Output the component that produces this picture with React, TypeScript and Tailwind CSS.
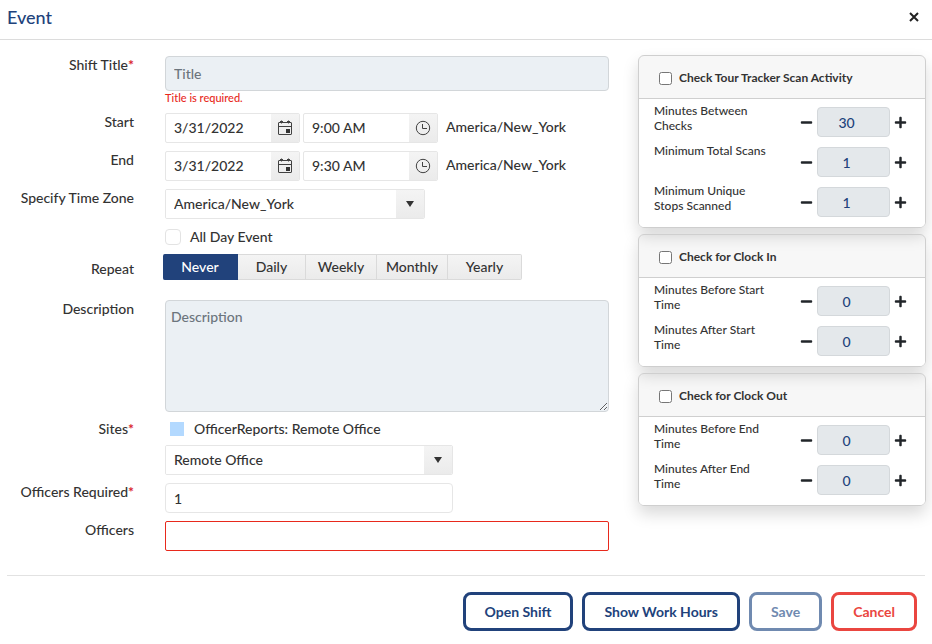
import { useState } from "react";
import type { ReactNode } from "react";
import { FaMinus, FaPlus } from "react-icons/fa";

const repeatOptions = [
  { label: "Never", width: "w-[75px]" },
  { label: "Daily", width: "w-[68px]" },
  { label: "Weekly", width: "w-[71px]" },
  { label: "Monthly", width: "w-[71px]" },
  { label: "Yearly", width: "w-[74px]" },
];

const checks = [
  {
    id: "tour",
    title: "Check Tour Tracker Scan Activity",
    fields: [
      { label: "Minutes Between Checks", value: 30 },
      { label: "Minimum Total Scans", value: 1 },
      { label: "Minimum Unique Stops Scanned", value: 1 },
    ],
  },
  {
    id: "clock-in",
    title: "Check for Clock In",
    fields: [
      { label: "Minutes Before Start Time", value: 0 },
      { label: "Minutes After Start Time", value: 0 },
    ],
  },
  {
    id: "clock-out",
    title: "Check for Clock Out",
    fields: [
      { label: "Minutes Before End Time", value: 0 },
      { label: "Minutes After End Time", value: 0 },
    ],
  },
];

function CalendarIcon() {
  return (
    <svg width="16" height="16" viewBox="0 0 16 16" fill="none" stroke="#424242" aria-hidden="true">
      <rect x="1.5" y="2.5" width="13" height="12" rx="0.5" />
      <path d="M1.5 6.5h13" />
      <path d="M4.5 0.5v3M11.5 0.5v3" />
      <path d="M3 1.5h3M10 1.5h3" />
      <rect x="9" y="9" width="4" height="4" fill="#333" stroke="none" />
    </svg>
  );
}

function ClockIcon() {
  return (
    <svg width="16" height="16" viewBox="0 0 16 16" fill="none" stroke="#424242" aria-hidden="true">
      <circle cx="8" cy="8" r="6.7" />
      <path d="M7.5 4v4.5H12" />
    </svg>
  );
}

function Row({ label, htmlFor, required, className = "", children }: { label?: string; htmlFor?: string; required?: boolean; className?: string; children: ReactNode }) {
  return (
    <div className={`flex items-start ${className}`}>
      <div className="w-[134px] shrink-0 text-right leading-[18px]">
        {label && (
          <label htmlFor={htmlFor}>
            {label}
            {required && <span className="font-bold text-[#d9232e]">*</span>}
          </label>
        )}
      </div>
      <div className="ml-[31px] min-w-0 flex-1">{children}</div>
    </div>
  );
}

function Picker({ id, label, value, icon }: { id?: string; label: string; value: string; icon: ReactNode }) {
  return (
    <div className="flex h-[30px] w-[135px] overflow-hidden rounded-xs border border-[#e6e6e6]">
      <input id={id} aria-label={label} defaultValue={value} className="w-full min-w-0 pl-2 outline-none" />
      <button type="button" aria-label={`Pick ${label}`} className="grid w-7 shrink-0 place-items-center bg-linear-to-b from-[#f4f4f4] to-[#ebebeb]">
        {icon}
      </button>
    </div>
  );
}

function DateTimeRow({ id, label, time }: { id: string; label: string; time: string }) {
  return (
    <Row label={label} htmlFor={id} className="mt-2">
      <div className="flex">
        <Picker id={id} label={`${label} date`} value="3/31/2022" icon={<CalendarIcon />} />
        <div className="ml-[3px]">
          <Picker label={`${label} time`} value={time} icon={<ClockIcon />} />
        </div>
        <span className="ml-2 leading-7">America/New_York</span>
      </div>
    </Row>
  );
}

function Dropdown({ id, value, className }: { id: string; value: string; className: string }) {
  return (
    <div className={`relative h-[30px] overflow-hidden rounded-xs border border-[#e6e6e6] ${className}`}>
      <select id={id} defaultValue={value} className="h-full w-full appearance-none bg-white pl-2 outline-none">
        <option>{value}</option>
      </select>
      <span className="pointer-events-none absolute inset-y-0 right-0 grid w-7 place-items-center bg-linear-to-b from-[#f4f4f4] to-[#ebebeb]">
        <svg width="8" height="6" viewBox="0 0 8 6" fill="#333" aria-hidden="true">
          <path d="M0 0h8L4 6z" />
        </svg>
      </span>
    </div>
  );
}

function Stepper({ id, label, initial }: { id: string; label: string; initial: number }) {
  const [value, setValue] = useState(initial);

  return (
    <div className="flex h-10 items-start">
      <label htmlFor={id} className="w-[120px] text-xs leading-[15px]">
        {label}
      </label>
      <div className="ml-auto flex items-center pt-1 text-[13px] text-[#212529]">
        <button type="button" aria-label={`Decrease ${label}`} onClick={() => setValue(Math.max(0, value - 1))}>
          <FaMinus />
        </button>
        <input
          id={id}
          value={value}
          onChange={(event) => setValue(Number(event.target.value) || 0)}
          className="mx-1 h-[30px] w-[73px] rounded-sm border border-[#d4d8db] bg-[#e4e8eb] pr-3.5 text-center text-sm text-[#21427b] outline-none"
        />
        <button type="button" aria-label={`Increase ${label}`} onClick={() => setValue(value + 1)}>
          <FaPlus />
        </button>
      </div>
    </div>
  );
}

export default function App() {
  const [repeat, setRepeat] = useState("Never");

  return (
    <div className="min-h-screen bg-white font-['Lato',sans-serif] text-sm font-medium text-[#333]">
      <header className="flex h-10 items-center justify-between border-b border-[#dcdcdc] pr-3 pb-1.5 pl-[7px]">
        <h1 className="text-lg text-[#21427b]">Event</h1>
        <button type="button" aria-label="Close" className="grid h-3 w-3 place-items-center">
          <svg width="10" height="10" viewBox="0 0 10 10" fill="none" stroke="#222" strokeWidth="2" aria-hidden="true">
            <path d="M1 1l8 8M9 1L1 9" />
          </svg>
        </button>
      </header>

      <form onSubmit={(event) => event.preventDefault()}>
        <div className="flex items-start">
          <div className="min-w-0 flex-1 pt-4">
            <Row label="Shift Title" htmlFor="title" required>
              <input
                id="title"
                placeholder="Title"
                className="block h-[35px] w-full rounded-sm border border-[#d2d6d9] bg-[#ebf0f4] px-2 outline-none placeholder:text-[#6c757d]"
              />
              <p className="text-[11px] leading-[14px] text-[#e8291c]">Title is required.</p>
            </Row>
            <DateTimeRow id="start" label="Start" time="9:00 AM" />
            <DateTimeRow id="end" label="End" time="9:30 AM" />
            <Row label="Specify Time Zone" htmlFor="zone" className="mt-2">
              <Dropdown id="zone" value="America/New_York" className="w-[260px]" />
            </Row>
            <Row className="mt-2">
              <label className="flex h-[19px] items-center gap-[9px]">
                <input type="checkbox" className="h-4 w-4 appearance-none rounded-sm border border-[#e3e3e3] checked:bg-[#21427b]" />
                All Day Event
              </label>
            </Row>
            <div className="mt-2 flex items-start">
              <span className="w-[134px] shrink-0 pt-1.5 text-right leading-[18px]">Repeat</span>
              <div role="group" aria-label="Repeat" className="ml-[29px] flex">
                {repeatOptions.map((option) => (
                  <button
                    key={option.label}
                    type="button"
                    aria-pressed={repeat === option.label}
                    onClick={() => setRepeat(option.label)}
                    className={`h-[26px] border-y border-r first:rounded-l-xs last:rounded-r-xs ${option.width} ${
                      repeat === option.label
                        ? "border-[#21427b] bg-[#21427b] text-white"
                        : "border-[#dadada] bg-linear-to-b from-[#f4f4f4] to-[#ebebeb]"
                    }`}
                  >
                    {option.label}
                  </button>
                ))}
              </div>
            </div>
            <Row label="Description" htmlFor="description" className="mt-5">
              <textarea
                id="description"
                placeholder="Description"
                className="block h-28 w-full resize rounded-sm border border-[#d2d6d9] bg-[#ebf0f4] px-[5px] py-1.5 outline-none placeholder:text-[#6c757d]"
              />
            </Row>
            <Row label="Sites" htmlFor="site" required className="mt-2">
              <div className="flex items-center leading-[18px]">
                <span className="ml-[5px] h-3.5 w-3.5 bg-[#b3d9ff]" />
                <span className="ml-2.5">OfficerReports: Remote Office</span>
              </div>
              <div className="mt-[7px]">
                <Dropdown id="site" value="Remote Office" className="w-72" />
              </div>
            </Row>
            <Row label="Officers Required" htmlFor="required" required className="mt-2">
              <input id="required" defaultValue="1" className="block h-[30px] w-72 rounded-sm border border-[#e6e6e6] px-2 outline-none" />
            </Row>
            <Row label="Officers" htmlFor="officers" className="mt-2">
              <input id="officers" className="block h-[30px] w-full rounded-xs border border-[#e8291c] px-2 outline-none" />
            </Row>
          </div>

          <aside className="mt-[15px] mr-1.5 ml-[29px] flex w-72 shrink-0 flex-col gap-1.5">
            {checks.map((check) => (
              <section key={check.id} className="overflow-hidden rounded-md border border-[#cfcfcf] shadow-[0_8px_16px_rgba(0,0,0,0.15)]">
                <label className="flex h-[43px] items-center gap-[7px] border-b border-[#cfcfcf] bg-black/3 pt-0.5 pl-5 text-xs font-bold">
                  <input type="checkbox" className="h-[13px] w-[13px]" />
                  {check.title}
                </label>
                <div className="bg-white py-1 pr-[18px] pl-[15px]">
                  {check.fields.map((field, index) => (
                    <Stepper key={field.label} id={`${check.id}-${index}`} label={field.label} initial={field.value} />
                  ))}
                </div>
              </section>
            ))}
          </aside>
        </div>

        <footer className="mx-[7px] mt-6 flex justify-end gap-[9px] border-t border-[#e2e2e2] pt-4 pr-2 pb-3 font-bold">
          <button type="button" className="h-[39px] rounded-lg border-3 border-[#21427b] px-[19px] text-[#21427b]">
            Open Shift
          </button>
          <button type="button" className="h-[39px] rounded-lg border-3 border-[#21427b] px-[19px] text-[#21427b]">
            Show Work Hours
          </button>
          <button type="submit" className="h-[39px] rounded-lg border-3 border-[#708ab0] px-[19px] text-[#708ab0]">
            Save
          </button>
          <button type="button" className="h-[39px] rounded-lg border-3 border-[#ea4640] px-[19px] text-[#ea4640]">
            Cancel
          </button>
        </footer>
      </form>
    </div>
  );
}
